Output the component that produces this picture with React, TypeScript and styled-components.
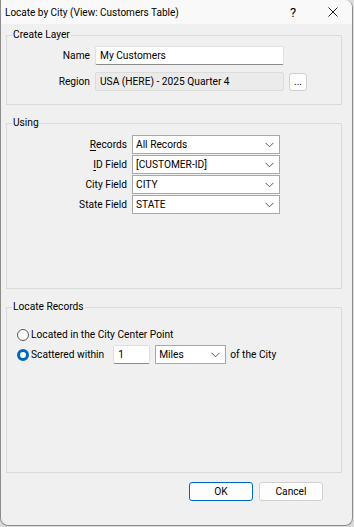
import { Fragment, FunctionComponent, JSX, ReactNode } from 'react';
import styled, { createGlobalStyle } from 'styled-components';

const GlobalStyle = createGlobalStyle`
  html, body {
    margin: 0;
    padding: 0;
    background: #dcdcdc;
  }
  * {
    box-sizing: border-box;
  }
`;

const Window = styled.div`
  width: 353px;
  height: 526px;
  display: flex;
  flex-direction: column;
  background: #f0f0f0;
  border: 1px solid #8c8c8c;
  border-top: none;
  border-radius: 0 8px 8px 8px;
  overflow: hidden;
  font-family: Roboto, 'Liberation Sans', sans-serif;
  font-size: 10.2px;
  color: #000;
  user-select: none;
`;

const TitleBar = styled.div`
  height: 24px;
  display: flex;
  align-items: center;
  background: #f9f9f9;
  padding-left: 4px;
  font-size: 10px;
`;
const Title = styled.div`
  flex: 1;
`;
const TitleButton = styled.div<{ $w: number }>`
  width: ${(p) => p.$w}px;
  height: 24px;
  display: flex;
  align-items: center;
  justify-content: center;
  font-size: 13px;
`;

const Body = styled.div`
  flex: 1;
  display: flex;
  flex-direction: column;
  padding: 4px 10px 0 5px;
  gap: 11px;
`;

const Group = styled.fieldset<{ $h: number }>`
  margin: 0;
  padding: 0;
  height: ${(p) => p.$h}px;
  border: 1px solid #dadada;
  min-width: 0;
`;
const Legend = styled.legend`
  margin-left: 5px;
  padding: 0 1px;
  line-height: 14px;
`;

const FormGrid = styled.div<{ $label: number; $top: number; $rowGap: number }>`
  display: grid;
  grid-template-columns: ${(p) => p.$label}px max-content max-content;
  column-gap: 5px;
  row-gap: ${(p) => p.$rowGap}px;
  align-items: center;
  padding-top: ${(p) => p.$top}px;
`;
const Label = styled.div`
  text-align: right;
  white-space: nowrap;
`;
const Key = styled.span`
  text-decoration: underline;
  text-underline-offset: 2px;
`;

const TextBox = styled.div<{ $w: number; $disabled?: boolean }>`
  width: ${(p) => p.$w}px;
  height: 19px;
  display: flex;
  align-items: center;
  padding-left: 4px;
  background: ${(p) => (p.$disabled ? '#ebebeb' : '#ffffff')};
  border: 1px solid ${(p) => (p.$disabled ? '#dcdcdc' : '#e0e0e0')};
  border-bottom-color: ${(p) => (p.$disabled ? '#dcdcdc' : '#8a8a8a')};
  border-radius: 2px;
  white-space: nowrap;
`;

const SmallButton = styled.div`
  width: 18px;
  height: 18px;
  display: flex;
  align-items: flex-end;
  justify-content: center;
  padding-bottom: 4px;
  font-size: 10px;
  line-height: 8px;
  background: #fdfdfd;
  border: 1px solid #d0d0d0;
  border-radius: 3px;
`;

const Select = styled.div<{ $w: number }>`
  width: ${(p) => p.$w}px;
  height: 19px;
  display: flex;
  align-items: center;
  justify-content: space-between;
  padding: 0 5px 0 3px;
  background: #ffffff;
  border: 1px solid #a8a8a8;
  white-space: nowrap;
`;

const RadioList = styled.div`
  display: flex;
  flex-direction: column;
  gap: 1px;
  padding: 11px 0 0 10px;
`;
const RadioRow = styled.div`
  display: flex;
  align-items: center;
  height: 19px;
  white-space: nowrap;
`;
const RadioDot = styled.span<{ $on?: boolean }>`
  width: 12px;
  height: 12px;
  border-radius: 50%;
  margin-right: 2px;
  background: ${(p) => (p.$on ? '#ffffff' : '#fbfbfb')};
  border: ${(p) => (p.$on ? '3.5px solid #0067c0' : '1px solid #5a5a5a')};
`;
const Spacer = styled.span<{ $w: number }>`
  display: inline-block;
  width: ${(p) => p.$w}px;
`;

const ButtonRow = styled.div`
  display: flex;
  justify-content: flex-end;
  gap: 6px;
  padding-right: 19px;
  margin-top: -2px;
`;
const DialogButton = styled.div<{ $default?: boolean }>`
  width: 64px;
  height: 19px;
  display: flex;
  align-items: center;
  justify-content: center;
  background: #fdfdfd;
  border: 1px solid ${(p) => (p.$default ? '#0067c0' : '#d0d0d0')};
  border-radius: 3px;
`;

const Chevron: FunctionComponent = (): JSX.Element => (
  <svg width="9" height="6" viewBox="0 0 9 6">
    <path d="M0.5 0.8 L4.5 4.8 L8.5 0.8" fill="none" stroke="#555" strokeWidth="1" />
  </svg>
);

const Combo: FunctionComponent<{ w: number; children: ReactNode }> = ({ w, children }): JSX.Element => (
  <Select $w={w}>
    <span>{children}</span>
    <Chevron />
  </Select>
);

const App: FunctionComponent = (): JSX.Element => {
  const fields: [ReactNode, string][] = [
    [<><Key>R</Key>ecords</>, 'All Records'],
    [<><Key>I</Key>D Field</>, '[CUSTOMER-ID]'],
    ['City Field', 'CITY'],
    ['State Field', 'STATE'],
  ];

  return (
    <>
      <GlobalStyle />
      <Window>
        <TitleBar>
          <Title>Locate by City (View: Customers Table)</Title>
          <TitleButton $w={22}>?</TitleButton>
          <Spacer $w={17} />
          <TitleButton $w={24}>
            <svg width="10" height="10" viewBox="0 0 10 10">
              <path d="M0.5 0.5 L9.5 9.5 M9.5 0.5 L0.5 9.5" stroke="#222" strokeWidth="1" />
            </svg>
          </TitleButton>
          <Spacer $w={7} />
        </TitleBar>

        <Body>
          <Group $h={77}>
            <Legend>Create Layer</Legend>
            <FormGrid $label={83} $top={4} $rowGap={7}>
              <Label>Name</Label>
              <TextBox $w={189}>My Customers</TextBox>
              <span />
              <Label>Region</Label>
              <TextBox $w={189} $disabled>USA (HERE) - 2025 Quarter 4</TextBox>
              <SmallButton>...</SmallButton>
            </FormGrid>
          </Group>

          <Group $h={173}>
            <Legend>Using</Legend>
            <FormGrid $label={120} $top={5} $rowGap={1}>
              {fields.map(([label, value], i) => (
                <Fragment key={i}>
                  <Label>{label}</Label>
                  <Combo w={148}>{value}</Combo>
                  <span />
                </Fragment>
              ))}
            </FormGrid>
          </Group>

          <Group $h={173}>
            <Legend>Locate Records</Legend>
            <RadioList>
              <RadioRow>
                <RadioDot />
                Located in the City Center Point
              </RadioRow>
              <RadioRow>
                <RadioDot $on />
                Scattered within
                <Spacer $w={9} />
                <TextBox $w={37}>1</TextBox>
                <Spacer $w={5} />
                <Combo w={71}>Miles</Combo>
                <Spacer $w={4} />
                of the City
              </RadioRow>
            </RadioList>
          </Group>

          <ButtonRow>
            <DialogButton $default>OK</DialogButton>
            <DialogButton>Cancel</DialogButton>
          </ButtonRow>
        </Body>
      </Window>
    </>
  );
};

export default App;
